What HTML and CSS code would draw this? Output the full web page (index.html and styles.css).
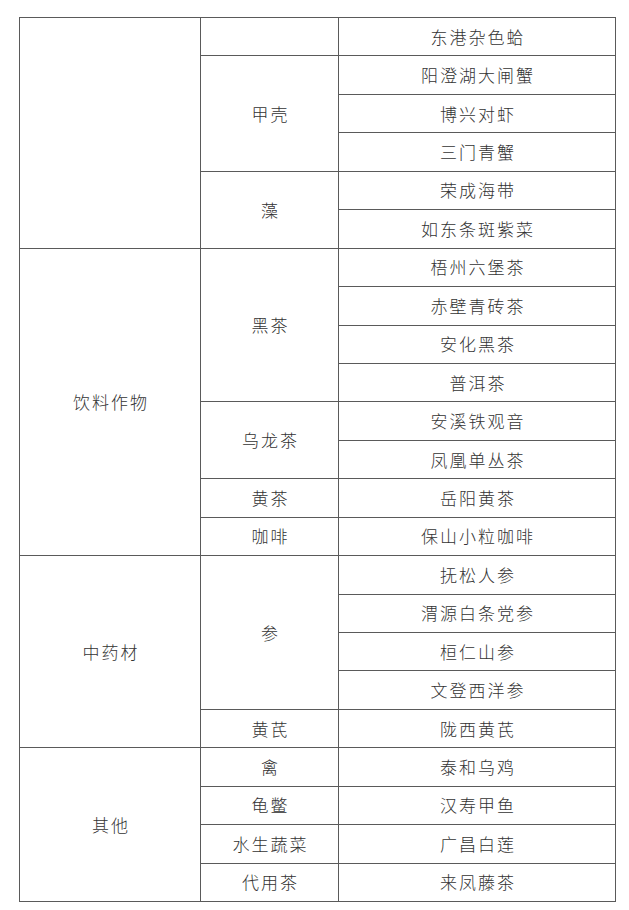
FILE: index.html
```html
<!DOCTYPE html>
<html lang="zh">
<head>
<meta charset="utf-8">
<link rel="stylesheet" href="styles.css">
</head>
<body>
<table class="gi">
  <colgroup><col class="c1"><col class="c2"><col class="c3"></colgroup>
  <tbody>
    <tr><td rowspan="6"></td><td></td><td>东港杂色蛤</td></tr>
    <tr><td rowspan="3">甲壳</td><td>阳澄湖大闸蟹</td></tr>
    <tr><td>博兴对虾</td></tr>
    <tr><td>三门青蟹</td></tr>
    <tr><td rowspan="2">藻</td><td>荣成海带</td></tr>
    <tr><td>如东条斑紫菜</td></tr>
    <tr><td rowspan="8">饮料作物</td><td rowspan="4">黑茶</td><td>梧州六堡茶</td></tr>
    <tr><td>赤壁青砖茶</td></tr>
    <tr><td>安化黑茶</td></tr>
    <tr><td>普洱茶</td></tr>
    <tr><td rowspan="2">乌龙茶</td><td>安溪铁观音</td></tr>
    <tr><td>凤凰单丛茶</td></tr>
    <tr><td>黄茶</td><td>岳阳黄茶</td></tr>
    <tr><td>咖啡</td><td>保山小粒咖啡</td></tr>
    <tr><td rowspan="5">中药材</td><td rowspan="4">参</td><td>抚松人参</td></tr>
    <tr><td>渭源白条党参</td></tr>
    <tr><td>桓仁山参</td></tr>
    <tr><td>文登西洋参</td></tr>
    <tr><td>黄芪</td><td>陇西黄芪</td></tr>
    <tr><td rowspan="4">其他</td><td>禽</td><td>泰和乌鸡</td></tr>
    <tr><td>龟鳖</td><td>汉寿甲鱼</td></tr>
    <tr><td>水生蔬菜</td><td>广昌白莲</td></tr>
    <tr><td>代用茶</td><td>来凤藤茶</td></tr>
  </tbody>
</table>
</body>
</html>
```
FILE: styles.css
```css
html, body {
  margin: 0;
  padding: 0;
  background: #ffffff;
}
body {
  padding: 17px 0 0 19px;
}
.gi {
  border-collapse: collapse;
  table-layout: fixed;
  width: 596px;
  font-family: "Noto Sans CJK SC", sans-serif;
  font-size: 17px;
  color: #333333;
}
.c1 { width: 181px; }
.c2 { width: 138px; }
.c3 { width: 277px; }
.gi td {
  border: 1px solid #5a5a5a;
  height: 37.45px;
  padding: 0;
  text-align: center;
  vertical-align: middle;
  letter-spacing: 2px;
  text-indent: 2px;
  line-height: 20px;
  font-weight: 300;
}
```
